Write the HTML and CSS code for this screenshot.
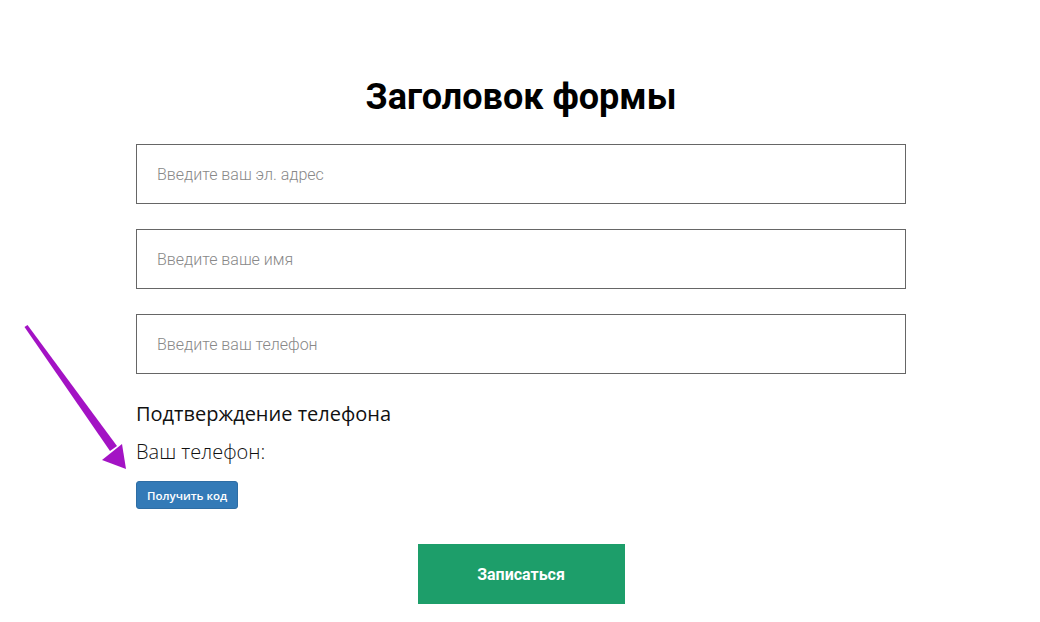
FILE: index.html
```html
<!DOCTYPE html>
<html lang="ru">
<head>
    <meta charset="UTF-8">
    <meta name="viewport" content="width=device-width, initial-scale=1.0">
    <title>Форма</title>
    <link rel="stylesheet" href="styles.css">
</head>
<body>
    <svg class="pointer" width="140" height="480" viewBox="0 0 140 480">
        <polygon points="24.5,327 27.5,325 117,446 110,451" fill="#a313c4"/>
        <polygon points="126,469 122,444 102,460" fill="#a313c4"/>
    </svg>
    <div class="form-container">
        <h1>Заголовок формы</h1>
        <form id="signup-form">
            <input type="email" class="field" placeholder="Введите ваш эл. адрес">
            <input type="text" class="field" placeholder="Введите ваше имя">
            <input type="tel" class="field" placeholder="Введите ваш телефон">
            <div class="confirm">
                <div class="confirm-title">Подтверждение телефона</div>
                <div class="confirm-phone">Ваш телефон:</div>
                <button type="button" class="code-button">Получить код</button>
            </div>
            <div class="submit-row">
                <button type="submit" class="submit-button">Записаться</button>
            </div>
        </form>
    </div>
</body>
</html>
```

FILE: styles.css
```css
body {
    margin: 0;
    padding: 0;
    background-color: #fff;
    font-family: Roboto, 'Liberation Sans', sans-serif;
    color: #000;
    position: relative;
}
.pointer {
    position: absolute;
    top: 0;
    left: 0;
}
.form-container {
    width: 770px;
    margin: 0 auto;
    padding: 72px 0 0 2px;
}
h1 {
    margin: 0 0 22px;
    font-size: 36px;
    font-weight: bold;
    line-height: 50px;
    text-align: center;
}
.field {
    display: block;
    box-sizing: border-box;
    width: 100%;
    height: 60px;
    margin-bottom: 25px;
    padding: 0 20px;
    border: 1px solid #666;
    border-radius: 0;
    font-family: Roboto, 'Liberation Sans', sans-serif;
    font-size: 16px;
    font-weight: 300;
    color: #333;
    outline: none;
}
.field::placeholder {
    color: #888;
}
.confirm {
    font-family: 'Open Sans', 'Liberation Sans', sans-serif;
    color: #111;
}
.confirm-title {
    font-size: 20px;
    line-height: 30px;
    margin-top: 4px;
}
.confirm-phone {
    font-size: 20px;
    font-weight: 300;
    line-height: 30px;
    margin-top: 8px;
}
.code-button {
    display: block;
    margin-top: 14px;
    height: 28px;
    padding: 0 10px;
    border: 1px solid #2e6da4;
    border-radius: 3px;
    background-color: #337ab7;
    color: #fff;
    font-family: 'Open Sans', 'Liberation Sans', sans-serif;
    font-size: 11.5px;
    font-weight: 600;
    cursor: pointer;
}
.submit-row {
    display: flex;
    justify-content: center;
    margin-top: 35px;
}
.submit-button {
    width: 207px;
    height: 60px;
    border: none;
    background-color: #1d9e6a;
    color: #fff;
    font-family: Roboto, 'Liberation Sans', sans-serif;
    font-size: 16px;
    font-weight: bold;
    cursor: pointer;
}
```
